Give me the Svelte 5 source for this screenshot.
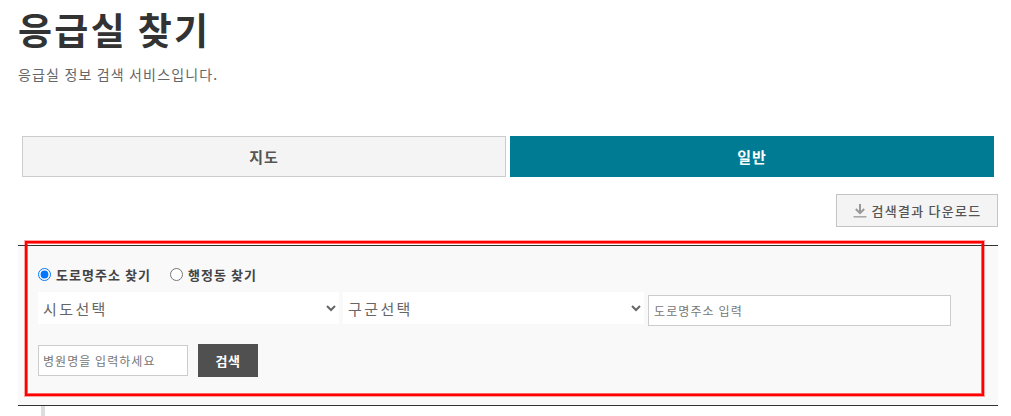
<script>
  // emergency room finder, search form only
  let mode = $state('road');
  const tabs = [
    { label: '지도', active: false },
    { label: '일반', active: true }
  ];
</script>

<main>
  <header>
    <h1>응급실 찾기</h1>
    <p class="sub">응급실 정보 검색 서비스입니다.</p>
  </header>

  <nav class="tabs">
    {#each tabs as t}
      <button type="button" class="tab" class:active={t.active}>{t.label}</button>
    {/each}
  </nav>

  <div class="tools">
    <button type="button" class="download">
      <svg width="14" height="15" viewBox="0 0 14 15" aria-hidden="true">
        <path d="M7 1V10M2.8 6L7 10.2L11.2 6" fill="none" stroke="#999" stroke-width="2" />
        <rect x="0.5" y="13" width="13" height="1.6" fill="#aaa" />
      </svg>
      검색결과 다운로드
    </button>
  </div>

  <section class="search">
    <div class="radios">
      <label><input type="radio" value="road" bind:group={mode} />도로명주소 찾기</label>
      <label><input type="radio" value="dong" bind:group={mode} />행정동 찾기</label>
    </div>
    <div class="row">
      <select class="sel"><option>시도선택</option></select>
      <select class="sel"><option>구군선택</option></select>
      <input class="addr" type="text" placeholder="도로명주소 입력" />
    </div>
    <div class="row2">
      <input class="name" type="text" placeholder="병원명을 입력하세요" />
      <button type="button" class="go">검색</button>
    </div>
    <div class="mark"></div>
  </section>

  <div class="rail"></div>
</main>

<style>
  :global(body) { background: #fff; }
  main {
    width: 980px; margin-left: 18px; height: 416px; overflow: hidden;
    font-family: "Noto Sans CJK KR", "Noto Sans", sans-serif; color: #333;
  }
  header { height: 136px; }
  h1 { margin: 0; padding-top: 3px; font-size: 37px; line-height: 52px; font-weight: 700; letter-spacing: 2.3px; color: #333; }
  .sub { margin: 9px 0 0; font-size: 14px; line-height: 20px; letter-spacing: 1.15px; color: #666; }

  .tabs { display: flex; gap: 4px; padding: 0 4px; }
  .tab {
    flex: 1; height: 41px; font: inherit; font-size: 15px; font-weight: 700; letter-spacing: 1px; color: #555;
    background: #f4f4f4; border: 1px solid #ccc; padding: 0;
  }
  .tab.active { background: #007b94; border-color: #007b94; color: #fff; }

  .tools { display: flex; justify-content: flex-end; margin-top: 17px; }
  .download {
    display: flex; align-items: center; justify-content: center; gap: 5px;
    width: 162px; height: 33px; padding: 0; font: inherit; font-size: 13px; font-weight: 500; letter-spacing: 1.25px; color: #555;
    background: #f4f4f4; border: 1px solid #c4c4c4;
  }

  .search {
    position: relative; box-sizing: border-box; height: 161px; margin-top: 18px;
    padding: 18px 20px 0; background: #f9f9f9;
    border-top: 1px solid #333; border-bottom: 1px solid #333;
  }
  .radios { display: flex; gap: 19px; height: 20px; font-size: 13px; font-weight: 700; letter-spacing: 1.05px; color: #444; }
  .radios label { display: flex; align-items: center; gap: 5px; }
  .radios input { margin: 0; width: 13px; height: 13px; }

  .row { display: flex; align-items: flex-start; gap: 4px; margin-top: 8px; }
  .sel {
    width: 301px; height: 32px; padding: 0 0 0 1px; border: 0; background: #fff;
    font: inherit; font-size: 15px; letter-spacing: 2.4px; color: #666;
  }
  .addr {
    box-sizing: border-box; width: 303px; height: 31px; margin-top: 3px; padding: 0 4px 0 5px;
    border: 1px solid #ccc; background: #fff; font: inherit; font-size: 12px; letter-spacing: 1.1px;
  }
  .row2 { display: flex; align-items: flex-start; gap: 10px; margin-top: 18px; }
  .name {
    box-sizing: border-box; width: 150px; height: 31px; margin-top: 1px; padding: 0 4px;
    border: 1px solid #ccc; background: #fff; font: inherit; font-size: 12px; letter-spacing: 1.05px;
  }
  input::placeholder { color: #777; opacity: 1; }
  .go {
    width: 60px; height: 33px; padding: 0; border: 0; background: #505050; color: #fff;
    font: inherit; font-size: 13px; font-weight: 700; letter-spacing: .5px;
  }

  /* red annotation drawn over the form */
  .mark {
    position: absolute; left: 7px; top: -5px; width: 959px; height: 155px; box-sizing: border-box;
    border: 2px solid #f00; pointer-events: none;
    box-shadow: 0 0 0 1px rgba(255, 0, 0, .35), inset 0 0 0 1px rgba(255, 0, 0, .6);
  }
  .rail { width: 4px; height: 11px; margin-left: 23px; background: #ddd; }
</style>
